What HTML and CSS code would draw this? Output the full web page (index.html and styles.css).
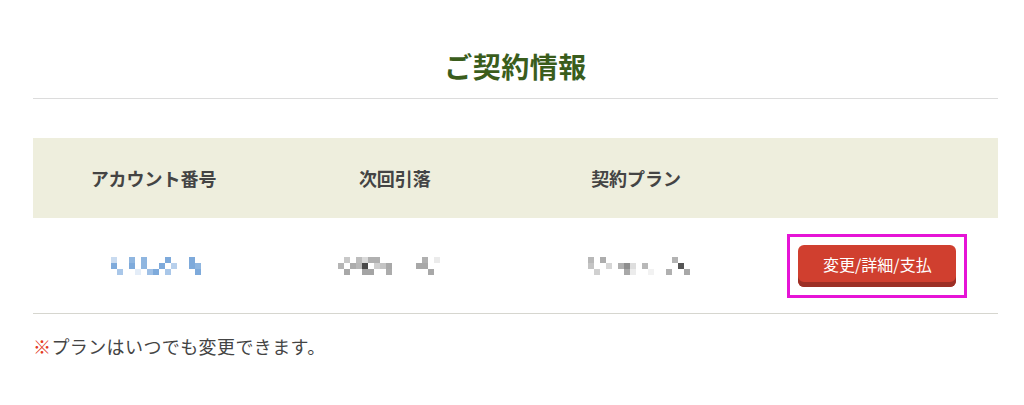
FILE: index.html
```html
<!DOCTYPE html>
<html lang="ja">
<head>
<meta charset="utf-8">
<title>ご契約情報</title>
<link rel="stylesheet" href="styles.css">
</head>
<body>
<main class="page">
  <h1 class="title">ご契約情報</h1>
  <section class="contract">
    <div class="row head">
      <div class="cell">アカウント番号</div>
      <div class="cell">次回引落</div>
      <div class="cell">契約プラン</div>
      <div class="cell"></div>
    </div>
    <div class="row body">
      <div class="cell">
        <svg class="mosaic m-account" width="90" height="18" viewBox="111 255 90 18" aria-hidden="true">
          <rect x="111" y="255" width="6" height="6" fill="#c9dbf0"/>
          <rect x="129" y="255" width="6" height="6" fill="#8fb6e0"/>
          <rect x="141" y="255" width="6" height="6" fill="#8fb6e0"/>
          <rect x="165" y="255" width="6" height="6" fill="#7eaadb"/>
          <rect x="189" y="255" width="6" height="6" fill="#7eaadb"/>
          <rect x="111" y="261" width="6" height="6" fill="#7eaadb"/>
          <rect x="129" y="261" width="6" height="6" fill="#7eaadb"/>
          <rect x="141" y="261" width="6" height="6" fill="#8fb6e0"/>
          <rect x="159" y="261" width="6" height="6" fill="#7eaadb"/>
          <rect x="171" y="261" width="6" height="6" fill="#b8d0ec"/>
          <rect x="189" y="261" width="6" height="6" fill="#7eaadb"/>
          <rect x="195" y="261" width="6" height="6" fill="#8fb6e0"/>
          <rect x="117" y="267" width="6" height="6" fill="#a9c7e9"/>
          <rect x="135" y="267" width="6" height="6" fill="#e4edf8"/>
          <rect x="147" y="267" width="6" height="6" fill="#9fc0e6"/>
          <rect x="153" y="267" width="6" height="6" fill="#7eaadb"/>
          <rect x="165" y="267" width="6" height="6" fill="#a9c7e9"/>
          <rect x="195" y="267" width="6" height="6" fill="#7eaadb"/>
        </svg>
      </div>
      <div class="cell">
        <svg class="mosaic m-date" width="102" height="18" viewBox="338 255 102 18" aria-hidden="true">
          <rect x="344" y="255" width="6" height="6" fill="#c8c8c8"/>
          <rect x="356" y="255" width="6" height="6" fill="#bdbdbd"/>
          <rect x="362" y="255" width="6" height="6" fill="#dadada"/>
          <rect x="368" y="255" width="12" height="6" fill="#b0b0b0"/>
          <rect x="422" y="255" width="6" height="6" fill="#b0b0b0"/>
          <rect x="434" y="255" width="6" height="6" fill="#ebebeb"/>
          <rect x="338" y="261" width="6" height="6" fill="#b5b5b5"/>
          <rect x="350" y="261" width="6" height="6" fill="#acacac"/>
          <rect x="356" y="261" width="6" height="6" fill="#b8b8b8"/>
          <rect x="362" y="261" width="6" height="6" fill="#4a4a4a"/>
          <rect x="374" y="261" width="6" height="6" fill="#cfcfcf"/>
          <rect x="380" y="261" width="6" height="6" fill="#c4c4c4"/>
          <rect x="386" y="261" width="6" height="6" fill="#a8a8a8"/>
          <rect x="416" y="261" width="12" height="6" fill="#a8a8a8"/>
          <rect x="344" y="267" width="6" height="6" fill="#a8a8a8"/>
          <rect x="362" y="267" width="12" height="6" fill="#a4a4a4"/>
          <rect x="386" y="267" width="6" height="6" fill="#acacac"/>
          <rect x="428" y="267" width="6" height="6" fill="#a8a8a8"/>
        </svg>
      </div>
      <div class="cell">
        <svg class="mosaic m-plan" width="102" height="18" viewBox="588 255 102 18" aria-hidden="true">
          <rect x="588" y="255" width="6" height="6" fill="#b8b8b8"/>
          <rect x="600" y="255" width="6" height="6" fill="#adadad"/>
          <rect x="672" y="255" width="6" height="6" fill="#b3b3b3"/>
          <rect x="588" y="261" width="6" height="6" fill="#c4c4c4"/>
          <rect x="606" y="261" width="6" height="6" fill="#d6d6d6"/>
          <rect x="618" y="261" width="6" height="6" fill="#b0b0b0"/>
          <rect x="624" y="261" width="6" height="6" fill="#8e8e8e"/>
          <rect x="630" y="261" width="6" height="6" fill="#dedede"/>
          <rect x="642" y="261" width="6" height="6" fill="#b8b8b8"/>
          <rect x="678" y="261" width="6" height="6" fill="#555555"/>
          <rect x="594" y="267" width="6" height="6" fill="#d0d0d0"/>
          <rect x="624" y="267" width="6" height="6" fill="#a8a8a8"/>
          <rect x="630" y="267" width="6" height="6" fill="#ececec"/>
          <rect x="648" y="267" width="6" height="6" fill="#f2f2f2"/>
          <rect x="666" y="267" width="6" height="6" fill="#b0b0b0"/>
          <rect x="684" y="267" width="6" height="6" fill="#a8a8a8"/>
        </svg>
      </div>
      <div class="cell">
        <div class="highlight">
          <button class="btn" type="button">変更/詳細/支払</button>
        </div>
      </div>
    </div>
  </section>
  <p class="note"><span class="mark">※</span>プランはいつでも変更できます。</p>
</main>
</body>
</html>
```

FILE: styles.css
```css
* { box-sizing: border-box; }

html, body {
  margin: 0;
  padding: 0;
  background: #ffffff;
}

body {
  font-family: "Noto Sans CJK JP", "Noto Sans", sans-serif;
  color: #444444;
}

.page {
  width: 965px;
  margin-left: 33px;
  padding-top: 45px;
}

.title {
  margin: 0;
  padding-bottom: 11px;
  font-size: 28px;
  line-height: 42px;
  font-weight: 700;
  color: #3a5d1c;
  text-align: center;
  letter-spacing: 0.5px;
  border-bottom: 1px solid #dcdcdc;
}

.contract {
  margin-top: 39px;
}

.row {
  display: grid;
  grid-template-columns: repeat(4, 1fr);
  align-items: center;
}

.row.head {
  height: 80px;
  background: #eeeedd;
}

.row.head .cell {
  font-size: 18px;
  font-weight: 700;
  color: #444444;
}

.row.body {
  height: 96px;
  border-bottom: 1px solid #d6d6cf;
}

.cell {
  display: flex;
  align-items: center;
  justify-content: center;
  text-align: center;
}

.mosaic {
  display: block;
}

.m-account { margin-left: 5px; }
.m-date { margin-left: -12px; }
.m-plan { margin-left: 6px; }

.highlight {
  border: 3px solid #e614d6;
  padding: 8px;
}

.btn {
  display: block;
  width: 158px;
  height: 42px;
  padding: 0 0 4px;
  border: none;
  border-radius: 6px;
  background: #d03f2f;
  box-shadow: inset 0 -5px 0 #9c2f25;
  color: #ffffff;
  font-family: "Noto Sans CJK JP", "Noto Sans", sans-serif;
  font-size: 16px;
  line-height: 1;
  cursor: pointer;
}

.note {
  margin: 19px 0 0;
  font-size: 18px;
  line-height: 27px;
  letter-spacing: 0.4px;
  color: #444444;
}

.mark {
  color: #e23a24;
}
```
